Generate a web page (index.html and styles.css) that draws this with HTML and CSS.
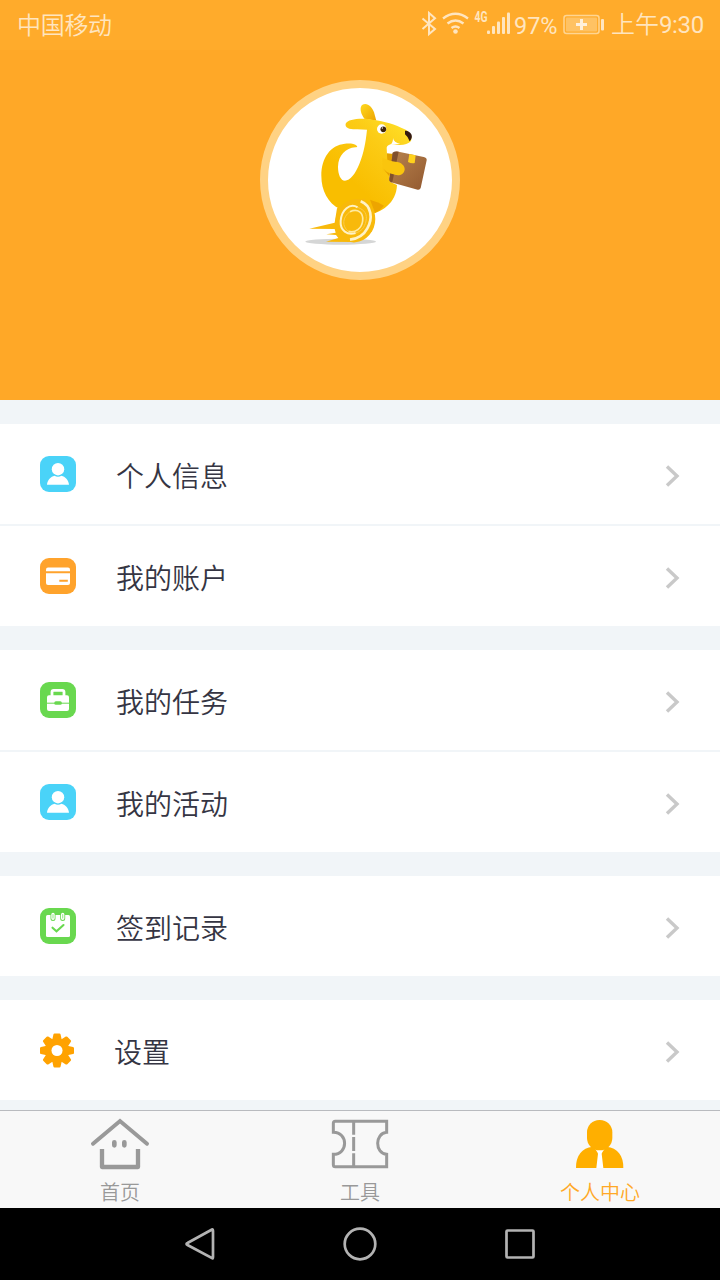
FILE: index.html
```
<!DOCTYPE html>
<html lang="zh-CN">
<head>
    <meta charset="UTF-8">
    <meta name="viewport" content="width=device-width, initial-scale=1.0">
    <title>个人中心</title>
    <link rel="stylesheet" href="styles.css">
</head>
<body>
    <div class="status-bar">
        <span class="carrier">中国移动</span>
        <svg class="signals" viewBox="0 0 92 30" width="92" height="30">
            <g fill="none" stroke="#ffe5bf" stroke-width="2">
                <path d="M1.500 9.500L14 20l-6 5V4l6 5.300L1.500 20"/>
                <path d="M22 9.500q12.500-9.500 25 0M26.500 14.500q8-6 16 0M30.500 19q4-3 8 0" stroke-width="2.400"/>
            </g>
            <g fill="#ffe5bf">
                <circle cx="34.500" cy="22.500" r="2.300"/>
                <text class="network" x="53.500" y="13" textLength="13" lengthAdjust="spacingAndGlyphs">4G</text>
                <rect x="66" y="21.500" width="3" height="3.500" rx="1"/>
                <rect x="71" y="17" width="3" height="8" rx="1"/>
                <rect x="76" y="12.500" width="3" height="12.500" rx="1"/>
                <rect x="81" y="8" width="3" height="17" rx="1"/>
                <rect x="86" y="3.500" width="3" height="21.500" rx="1"/>
            </g>
        </svg>
        <span class="percent">97%</span>
        <svg class="battery" viewBox="0 0 42 22" width="42" height="22">
            <rect x="1" y="1.500" width="35" height="18" rx="2.500" fill="none" stroke="#ffd592" stroke-width="1.500"/>
            <rect x="3" y="3.500" width="31" height="14" rx="1" fill="#ffc263"/>
            <path d="M18.500 5v11M13 10.500h11" stroke="#fff0dc" stroke-width="3"/>
            <rect x="38" y="5" width="3" height="11.500" rx="1" fill="#ffe5bf"/>
        </svg>
        <span class="time">上午<span class="digits">9:30</span></span>
    </div>

    <header class="profile">
        <div class="avatar">
            <svg viewBox="39 39 552 552" width="184" height="184">
                <defs>
                    <linearGradient id="body" x1="1" y1="0" x2="0.4" y2="0.7">
                        <stop offset="0" stop-color="#ffe42c"/>
                        <stop offset="0.45" stop-color="#fccc16"/>
                        <stop offset="1" stop-color="#f9be00"/>
                    </linearGradient>
                    <linearGradient id="box" x1="0" y1="0" x2="1" y2="1">
                        <stop offset="0" stop-color="#b8834d"/>
                        <stop offset="1" stop-color="#925930"/>
                    </linearGradient>
                    <linearGradient id="ear" x1="0" y1="0" x2="1" y2="1">
                        <stop offset="0" stop-color="#ffd91f"/>
                        <stop offset="1" stop-color="#eda300"/>
                    </linearGradient>
                </defs>
                <ellipse cx="257" cy="500" rx="106" ry="9" fill="#d5d6d6"/>
                <path d="M328 131C317 116 313 99 321 90C335 80 351 94 357 112L364 137Z" fill="url(#ear)"/>
                <path d="M396 235l20 2-2 36-18-5Z" fill="#e3a000"/>
                <!-- tail, back, head and belly -->
                <path d="M306 213C299 206 286 205 270 206C226 210 199 249 199 302C199 347 219 384 254 402L330 422C381 414 424 384 426 330L405 320L402 290L386 272L397 259L395 218C398 209 406 208 417 208C438 213 458 209 468 198C472 184 466 171 449 163C422 149 386 138 356 135C324 128 279 131 272 146C269 158 284 164 307 163L336 164C332 204 326 234 313 267C301 297 285 317 270 317C257 317 249 298 249 275C250 241 272 219 301 217C305 217 308 216 306 213Z" fill="url(#body)"/>
                <path d="M345 374q27 8 42 18q-10 14-27 21Z" fill="#eda500"/>
                <!-- parcel -->
                <path d="M413 233Q420 228 431 230L506 246Q516 248 515 256L497 339Q495 345 488 344L408 322Q402 321 403 313Z" fill="url(#box)"/>
                <path d="M413 233Q420 228 431 230L412 322L408 322Q402 321 403 313Z" fill="#80502d"/>
                <path d="M463 237l19 4-3 23q-10 2-20-3Z" fill="#ffd21c"/>
                <path d="M382 248C395 253 409 259 421 260C439 261 450 272 449 284C447 297 436 302 423 300L404 295L383 290Z" fill="#fac50d"/>
                <path d="M385 281Q395 292 405 295L404 305Z" fill="#e7a200"/>
                <!-- face -->
                <circle cx="380" cy="162" r="14" fill="#fff"/>
                <circle cx="385" cy="163" r="8.500" fill="#402408"/>
                <circle cx="382" cy="159" r="2" fill="#fff"/>
                <path d="M450 167Q462 166 469 178Q474 189 464 199Q459 185 450 178Z" fill="#351b10"/>
                <path d="M414 189Q416 203 436 206L417 208L404 211Q415 204 414 189Z" fill="#fff"/>
                <!-- wheel -->
                <path d="M163 461L239 443L246 400L330 370L350 470L288 501L213 500L250 489L243 480L214 478L242 473L239 462Z" fill="#f8b90b"/>
                <ellipse cx="301" cy="437" rx="59" ry="66" transform="rotate(20 301 437)" fill="#f8b90b"/>
                <g fill="none">
                    <path d="M317 379C350 392 354 431 337 460C326 481 309 491 285 494" stroke="#fff2c5" stroke-width="8"/>
                    <path d="M308 397C285 383 259 404 257 438C255 467 277 482 302 474" stroke="#fff2c5" stroke-width="6"/>
                    <path d="M308 397C330 405 337 418 333 438C329 458 319 469 302 474" stroke="#fbcc4b" stroke-width="3"/>
                    <path d="M285 410C309 399 326 414 323 438C320 460 302 475 280 469" stroke="#ffeaa0" stroke-width="5"/>
                    <path d="M285 410C262 426 260 454 280 469" stroke="#fbcc4b" stroke-width="3"/>
                </g>
            </svg>
        </div>
    </header>

    <main class="menu">
        <section class="group">
            <a class="item">
                <svg class="icon" viewBox="0 0 36 36">
                    <rect width="36" height="36" rx="9" fill="#4ad3f8"/>
                    <circle cx="18" cy="13.200" r="6.200" fill="#fff"/>
                    <path d="M7 28.800C7.300 24 11 20.500 14.500 19.700Q18 22 21.500 19.700C25 20.500 28.700 24 29 28.800Z" fill="#fff"/>
                </svg>
                <span class="label">个人信息</span>
                <svg class="arrow" viewBox="0 0 16 24"><path d="M3 2.500L13 12 3 21.500"/></svg>
            </a>
            <a class="item">
                <svg class="icon" viewBox="0 0 36 36">
                    <rect width="36" height="36" rx="9" fill="#ffa32c"/>
                    <rect x="6" y="9.500" width="24" height="17.500" rx="2" fill="#fff"/>
                    <path d="M6 14.200h24M19.300 22.700h8.500" stroke="#ffa32c" stroke-width="2"/>
                </svg>
                <span class="label">我的账户</span>
                <svg class="arrow" viewBox="0 0 16 24"><path d="M3 2.500L13 12 3 21.500"/></svg>
            </a>
        </section>

        <section class="group">
            <a class="item">
                <svg class="icon" viewBox="0 0 36 36">
                    <rect width="36" height="36" rx="9" fill="#69d84f"/>
                    <path d="M12 15V10Q12 8.300 13.700 8.300H22.300Q24 8.300 24 10V15" fill="none" stroke="#fff" stroke-width="2.800"/>
                    <rect x="7" y="13.200" width="22" height="15.800" rx="2" fill="#fff"/>
                    <path d="M7 21.200h22" stroke="#69d84f" stroke-width="1"/>
                    <rect x="14.300" y="19.200" width="7.500" height="3.600" rx="1.500" fill="#69d84f"/>
                </svg>
                <span class="label">我的任务</span>
                <svg class="arrow" viewBox="0 0 16 24"><path d="M3 2.500L13 12 3 21.500"/></svg>
            </a>
            <a class="item">
                <svg class="icon" viewBox="0 0 36 36">
                    <rect width="36" height="36" rx="9" fill="#4ad3f8"/>
                    <circle cx="18" cy="13.200" r="6.200" fill="#fff"/>
                    <path d="M7 28.800C7.300 24 11 20.500 14.500 19.700Q18 22 21.500 19.700C25 20.500 28.700 24 29 28.800Z" fill="#fff"/>
                </svg>
                <span class="label">我的活动</span>
                <svg class="arrow" viewBox="0 0 16 24"><path d="M3 2.500L13 12 3 21.500"/></svg>
            </a>
        </section>

        <section class="group">
            <a class="item">
                <svg class="icon" viewBox="0 0 36 36">
                    <rect width="36" height="36" rx="9" fill="#69d84f"/>
                    <rect x="6" y="7" width="24" height="22" rx="1.500" fill="#fff"/>
                    <path d="M13 6v4.500M22.700 6v4.500" stroke="#69d84f" stroke-width="5" stroke-linecap="round"/>
                    <path d="M13 6.500v3.700M22.700 6.500v3.700" stroke="#fff" stroke-width="3.400" stroke-linecap="round"/>
                    <path d="M13 6.500v3.500M22.700 6.500v3.500" stroke="#a5e897" stroke-width="1.200" stroke-linecap="round"/>
                    <path d="M12.500 19.700l4 3.600 7-6.300" fill="none" stroke="#69d84f" stroke-width="2.100" stroke-linecap="round"/>
                </svg>
                <span class="label">签到记录</span>
                <svg class="arrow" viewBox="0 0 16 24"><path d="M3 2.500L13 12 3 21.500"/></svg>
            </a>
        </section>

        <section class="group">
            <a class="item settings">
                <svg class="icon" viewBox="-17.500 -17.500 35 35">
                    <g fill="#ffa200">
                        <path id="tooth" d="M-5 -10.500L-3.700 -16.500Q-3.500 -17.500 -2.500 -17.500H2.500Q3.500 -17.500 3.700 -16.500L5 -10.500Z"/>
                        <use href="#tooth" transform="rotate(45)"/>
                        <use href="#tooth" transform="rotate(90)"/>
                        <use href="#tooth" transform="rotate(135)"/>
                        <use href="#tooth" transform="rotate(180)"/>
                        <use href="#tooth" transform="rotate(225)"/>
                        <use href="#tooth" transform="rotate(270)"/>
                        <use href="#tooth" transform="rotate(315)"/>
                        <circle r="12.300"/>
                    </g>
                    <circle r="5.700" fill="#fff"/>
                </svg>
                <span class="label">设置</span>
                <svg class="arrow" viewBox="0 0 16 24"><path d="M3 2.500L13 12 3 21.500"/></svg>
            </a>
        </section>
    </main>

    <nav class="tab-bar">
        <a class="tab">
            <svg viewBox="60 48 180 165" width="60" height="55">
                <g fill="none" stroke="#999">
                    <path d="M69 131L150 63L231 131" stroke-width="12" stroke-linecap="round"/>
                    <path d="M96 147V201H204V147" stroke-width="13" stroke-linejoin="round"/>
                    <path d="M133 127v9M163 127v9" stroke-width="14" stroke-linecap="round"/>
                </g>
            </svg>
            <span>首页</span>
        </a>
        <a class="tab">
            <svg viewBox="60 48 180 165" width="60" height="55">
                <g fill="none" stroke="#999" stroke-width="9">
                    <path d="M230 64H76Q70 64 70 70V97C115 97 115 163 70 163V194Q70 200 76 200H230V163C194 160 194 100 230 97Z"/>
                    <path d="M131 64v40M131 111v42M131 160v40"/>
                </g>
            </svg>
            <span>工具</span>
        </a>
        <a class="tab active">
            <svg viewBox="60 48 180 165" width="60" height="55">
                <path d="M78 204C77 168 96 143 128 140H170C202 143 221 168 220 204Z" fill="#ffaf00"/>
                <path d="M135 146l7 11 2 4-5 43h21l-5-43 2-4 7-11Z" fill="#fff"/>
                <rect x="111" y="60" width="76" height="91" rx="37" fill="#ffaf00"/>
            </svg>
            <span>个人中心</span>
        </a>
    </nav>

    <footer class="system-bar">
        <svg viewBox="0 0 40 40"><path d="M32 5.500Q33 5 33 7V33Q33 35 32 34L7.500 21Q5.500 20 7.500 19Z"/></svg>
        <svg viewBox="0 0 40 40"><circle cx="20" cy="20" r="15.300"/></svg>
        <svg viewBox="0 0 40 40"><rect x="6.500" y="6.500" width="27" height="27" rx="1"/></svg>
    </footer>
</body>
</html>
```
FILE: styles.css
```
* {
    box-sizing: border-box;
}

body {
    margin: 0;
    width: 720px;
    height: 1280px;
    display: flex;
    flex-direction: column;
    overflow: hidden;
    background-color: #f1f5f8;
    font-family: "Noto Sans CJK SC", sans-serif;
    font-weight: 350;
}

svg {
    display: block;
    flex: none;
}

.status-bar {
    display: flex;
    align-items: center;
    height: 50px;
    padding: 0 16px;
    background-color: #ffab2b;
    color: #ffe5bf;
    font-size: 24px;
    line-height: 46px;
    white-space: nowrap;
}

.carrier {
    flex: 1;
    padding-left: 1px;
    letter-spacing: -0.3px;
}

.carrier,
.time {
    margin-top: -2px;
}

.signals {
    margin-top: -2px;
}

.network {
    font-family: Roboto, sans-serif;
    font-size: 14px;
    font-weight: bold;
}

.percent,
.digits {
    font-family: Roboto, sans-serif;
    font-weight: 400;
}

.digits {
    letter-spacing: -0.3px;
}

.percent {
    width: 50px;
    padding: 2px 0 0 1px;
    font-size: 23.5px;
}

.battery {
    margin-right: 6px;
}

.profile {
    height: 350px;
    padding-top: 30px;
    background-color: #ffa827;
}

.avatar {
    width: 200px;
    height: 200px;
    margin: 0 auto;
    border: 8px solid #ffd283;
    border-radius: 50%;
    background-color: #fff;
}

.menu {
    display: flex;
    flex-direction: column;
    gap: 24px;
    height: 710px;
    padding-top: 24px;
}

.group {
    display: flex;
    flex-direction: column;
    gap: 2px;
}

.item {
    display: flex;
    align-items: center;
    height: 100px;
    padding: 0 40px;
    background-color: #fff;
    color: #353543;
    font-size: 28px;
}

.icon {
    width: 36px;
    height: 36px;
}

.label {
    flex: 1;
    padding: 2px 0 0 40px;
    line-height: 40px;
}

.arrow {
    width: 16px;
    height: 24px;
    margin-top: 4px;
    fill: none;
    stroke: #c9c9c9;
    stroke-width: 3.4;
}

.settings .icon {
    width: 34px;
    height: 35px;
}

.tab-bar {
    display: flex;
    height: 98px;
    padding-top: 5px;
    border-top: 1px solid #b9bbbf;
    background-color: #f8f8f8;
    color: #999;
    font-size: 20px;
}

.tab {
    flex: 1;
    display: flex;
    flex-direction: column;
    align-items: center;
    line-height: 42px;
}

.active {
    color: #ffa827;
}

.system-bar {
    display: flex;
    justify-content: center;
    gap: 120px;
    height: 72px;
    padding-top: 16px;
    background-color: #000;
}

.system-bar svg {
    width: 40px;
    height: 40px;
    fill: none;
    stroke: #b3b3b3;
    stroke-width: 2.7;
}
```
